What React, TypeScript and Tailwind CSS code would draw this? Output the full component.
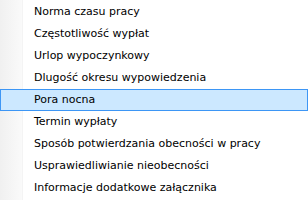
const items = [
  "Norma czasu pracy",
  "Częstotliwość wypłat",
  "Urlop wypoczynkowy",
  "Dlugość okresu wypowiedzenia",
  "Pora nocna",
  "Termin wypłaty",
  "Sposób potwierdzania obecności w pracy",
  "Usprawiedliwianie nieobecności",
  "Informacje dodatkowe załącznika",
];

const selected = 4;

export default function App() {
  return (
    <div className="relative w-[308px] h-[200px] bg-white overflow-hidden font-['DejaVu_Sans',sans-serif] text-[11px] text-black">
      {/* gutter strip */}
      <div className="absolute left-0 top-0 bottom-0 w-[23px] bg-gradient-to-r from-[#f0f0f0] to-[#fafafa] border-r border-[#f4f4f4]" />
      <ul className="relative pt-px">
        {items.map((label, i) => (
          <li
            key={label}
            className={
              i === selected
                ? "h-[22px] flex items-center pl-[33px] bg-[#cce8ff] border border-[#3d96f5]"
                : "h-[22px] flex items-center pl-[34px]"
            }
          >
            {label}
          </li>
        ))}
      </ul>
    </div>
  );
}
